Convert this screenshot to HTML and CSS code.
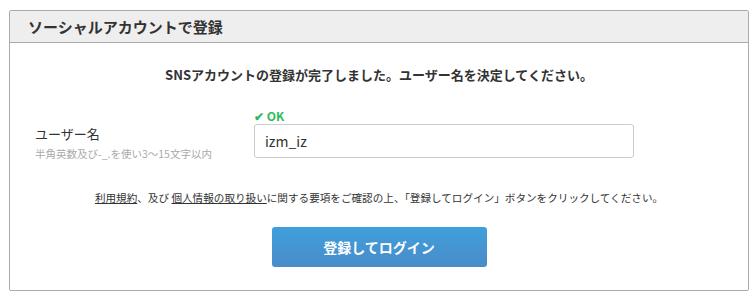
FILE: index.html
```html
<!DOCTYPE html>
<html lang="ja">
<head>
  <meta charset="UTF-8">
  <title>ソーシャルアカウントで登録</title>
  <link rel="stylesheet" href="styles.css">
</head>
<body>
  <div class="panel">
    <div class="panel-head">ソーシャルアカウントで登録</div>
    <div class="panel-body">
      <p class="lead">SNSアカウントの登録が完了しました。ユーザー名を決定してください。</p>

      <div class="form-row">
        <div class="form-label">
          <div class="label">ユーザー名</div>
          <div class="hint">半角英数及び-_.を使い3〜15文字以内</div>
        </div>
        <div class="form-field">
          <div class="ok">✔ OK</div>
          <input type="text" class="text-input" value="izm_iz">
        </div>
      </div>

      <p class="terms"><a href="#">利用規約</a>、及び <a href="#">個人情報の取り扱い</a>に関する要項をご確認の上、「登録してログイン」ボタンをクリックしてください。</p>

      <div class="actions">
        <button class="btn-submit">登録してログイン</button>
      </div>
    </div>
  </div>
</body>
</html>
```

FILE: styles.css
```css
* {
  box-sizing: border-box;
}

body {
  margin: 0;
  padding: 10px 7px 0 9px;
  font-family: "Noto Sans CJK JP", "Noto Sans", sans-serif;
  color: #333;
  background: #fff;
}

.panel {
  width: 740px;
  height: 281px;
  border: 1px solid #aaa;
  border-radius: 2px;
}

.panel-head {
  height: 32px;
  line-height: 31px;
  padding-left: 18px;
  background: #eee;
  border-bottom: 1px solid #aaa;
  font-size: 15px;
  font-weight: bold;
}

.panel-body {
  padding: 0 25px;
}

.lead {
  margin: 22px 0 0;
  text-align: center;
  font-size: 13px;
  font-weight: bold;
  line-height: 20px;
}

.form-row {
  display: grid;
  grid-template-columns: 219px 380px;
  margin-top: 23px;
}

.form-label {
  padding-top: 16px;
}

.label {
  font-size: 13px;
  line-height: 20px;
}

.hint {
  margin-top: 2px;
  font-size: 10.5px;
  line-height: 16px;
  color: #aaa;
}

.ok {
  font-size: 12px;
  font-weight: bold;
  color: #2bbb5c;
  line-height: 16px;
}

.text-input {
  display: block;
  width: 380px;
  height: 34px;
  padding: 0 10px;
  border: 1px solid #ccc;
  border-radius: 3px;
  font-family: inherit;
  font-size: 14px;
  color: #333;
}

.terms {
  margin: 28px 0 0;
  text-align: center;
  font-size: 10.6px;
  line-height: 16px;
}

.terms a {
  color: #333;
  text-decoration: underline;
}

.actions {
  display: flex;
  justify-content: center;
  margin-top: 21px;
}

.btn-submit {
  width: 215px;
  height: 40px;
  border: none;
  border-radius: 3px;
  background: linear-gradient(#3e9fdc, #4a8bc9);
  color: #fff;
  font-family: inherit;
  font-size: 14px;
  font-weight: bold;
  cursor: pointer;
}
```
